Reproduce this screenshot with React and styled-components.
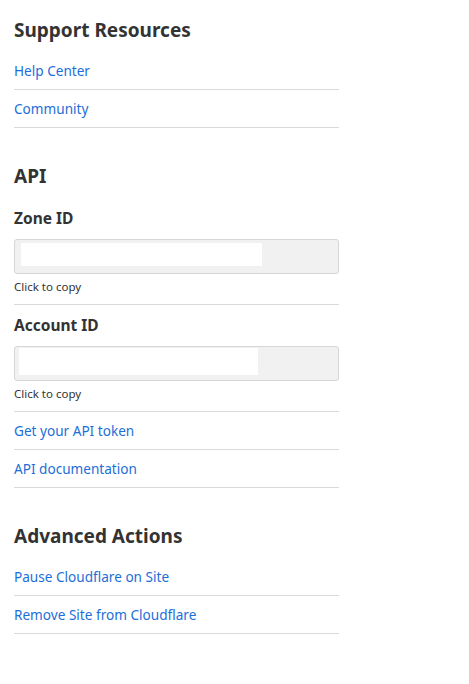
import React from "react";
import styled, { createGlobalStyle } from "styled-components";

const GlobalStyle = createGlobalStyle`
  body {
    margin: 0;
    background: #fff;
    font-family: "Noto Sans", "Open Sans", sans-serif;
    color: #333;
  }
`;

const Page = styled.div`
  width: 325px;
  padding: 14px 0 40px 14px;
  display: flex;
  flex-direction: column;
`;

const Section = styled.section`
  display: flex;
  flex-direction: column;
  margin-bottom: 32px;
`;

const Title = styled.h2`
  margin: 2px 0 8px;
  font-size: 19px;
  font-weight: 700;
  line-height: 28px;
  color: #333;
`;

const LinkRow = styled.a`
  display: block;
  padding: 9px 0 8px;
  font-size: 13.6px;
  line-height: 20px;
  color: #1d6ed8;
  text-decoration: none;
  border-bottom: 1px solid #d9d9d9;
  cursor: pointer;
`;

const Field = styled.div`
  display: flex;
  flex-direction: column;
  padding-top: 4px;
  padding-bottom: 9px;
  border-bottom: 1px solid #d9d9d9;
`;

const Label = styled.h3`
  margin: 5px 0 10px;
  font-size: 15.5px;
  font-weight: 700;
  line-height: 22px;
  color: #333;
`;

const IdBox = styled.div`
  height: 35px;
  box-sizing: border-box;
  background: #f1f1f1;
  border: 1px solid #d6d6d6;
  border-radius: 3px;
  padding: ${(p) => p.$pad};
  display: flex;
`;

const Mask = styled.div`
  width: ${(p) => p.$w}px;
  background: #fff;
`;

const Hint = styled.small`
  margin-top: 5px;
  font-size: 11.5px;
  line-height: 16px;
  color: #333;
`;

export default function App() {
  return (
    <>
      <GlobalStyle />
      <Page>
        <Section>
          <Title>Support Resources</Title>
          <LinkRow>Help Center</LinkRow>
          <LinkRow>Community</LinkRow>
        </Section>
        <Section>
          <Title>API</Title>
          <Field>
            <Label>Zone ID</Label>
            <IdBox $pad="3px 76px 7px 6px">
              <Mask $w={241} />
            </IdBox>
            <Hint>Click to copy</Hint>
          </Field>
          <Field>
            <Label>Account ID</Label>
            <IdBox $pad="1px 80px 5px 4px">
              <Mask $w={239} />
            </IdBox>
            <Hint>Click to copy</Hint>
          </Field>
          <LinkRow>Get your API token</LinkRow>
          <LinkRow>API documentation</LinkRow>
        </Section>
        <Section>
          <Title>Advanced Actions</Title>
          <LinkRow>Pause Cloudflare on Site</LinkRow>
          <LinkRow>Remove Site from Cloudflare</LinkRow>
        </Section>
      </Page>
    </>
  );
}
